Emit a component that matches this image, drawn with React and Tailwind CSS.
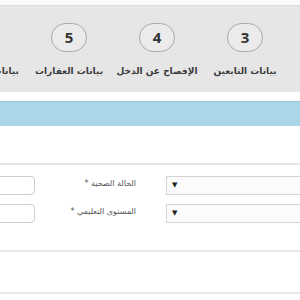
import React from "react";

const steps = [
  { n: 3, label: "بيانات التابعين" },
  { n: 4, label: "الإفصاح عن الدخل" },
  { n: 5, label: "بيانات العقارات" },
  { n: 6, label: "بيانات المستندات" },
];

const rows = [{ label: "الحالة الصحية *" }, { label: "المستوى التعليمي *" }];

const App = () => {
  return (
    <div className="w-[300px] h-[300px] overflow-hidden bg-white" style={{ fontFamily: '"DejaVu Sans", sans-serif' }}>
      {/* bande du haut */}
      <div className="h-[6px] bg-[#fafafa] border-b border-[#dcdcdc]" />

      {/* étapes */}
      <div dir="rtl" className="h-[86px] bg-[#e6e6e6] flex pr-[11px] overflow-hidden">
        {steps.map((s) => (
          <div key={s.n} className="w-[88px] shrink-0 flex flex-col items-center pt-[17px]">
            <div className="w-[36px] h-[29px] rounded-full border-[1.5px] border-[#a9a9a9] bg-[#ebebeb] flex items-center justify-center text-[15px] font-bold text-[#333]" style={{ fontFamily: '"Open Sans", sans-serif' }}>
              {s.n}
            </div>
            <div className="mt-[12px] text-[9px] font-bold text-[#3c3c3c] whitespace-nowrap leading-[14px]">{s.label}</div>
          </div>
        ))}
      </div>

      <div className="h-[9px]" />

      {/* barre bleue */}
      <div className="h-[25px] bg-[#aad7e8] border-t border-[#98c6da]" />

      <div className="h-[37px]" />
      <div className="border-t-2 border-[#e6e6e6]" />

      {/* formulaire */}
      <div className="pt-[11px] flex flex-col gap-[9px]">
        {rows.map((r, i) => (
          <div key={i} className="flex h-[19px]">
            <div className="w-[45px] -ml-[10px] shrink-0 border border-[#cfcfcf] rounded-sm bg-white" />
            <div dir="rtl" className="w-[101px] shrink-0 text-right pt-[2px] text-[8px] text-[#555] whitespace-nowrap">
              {r.label}
            </div>
            <div className="w-[134px] ml-[30px] shrink-0 border border-[#d4d4d4] border-r-0 bg-[#fbfbfb] flex items-center pl-[5px] text-[7px] text-[#222]">
              ▼
            </div>
          </div>
        ))}
      </div>

      <div className="h-[27px]" />
      <div className="border-t-2 border-[#e8e8e8]" />
      <div className="h-[40px]" />
      <div className="border-t-2 border-[#e8e8e8]" />
    </div>
  );
};

export default App;
